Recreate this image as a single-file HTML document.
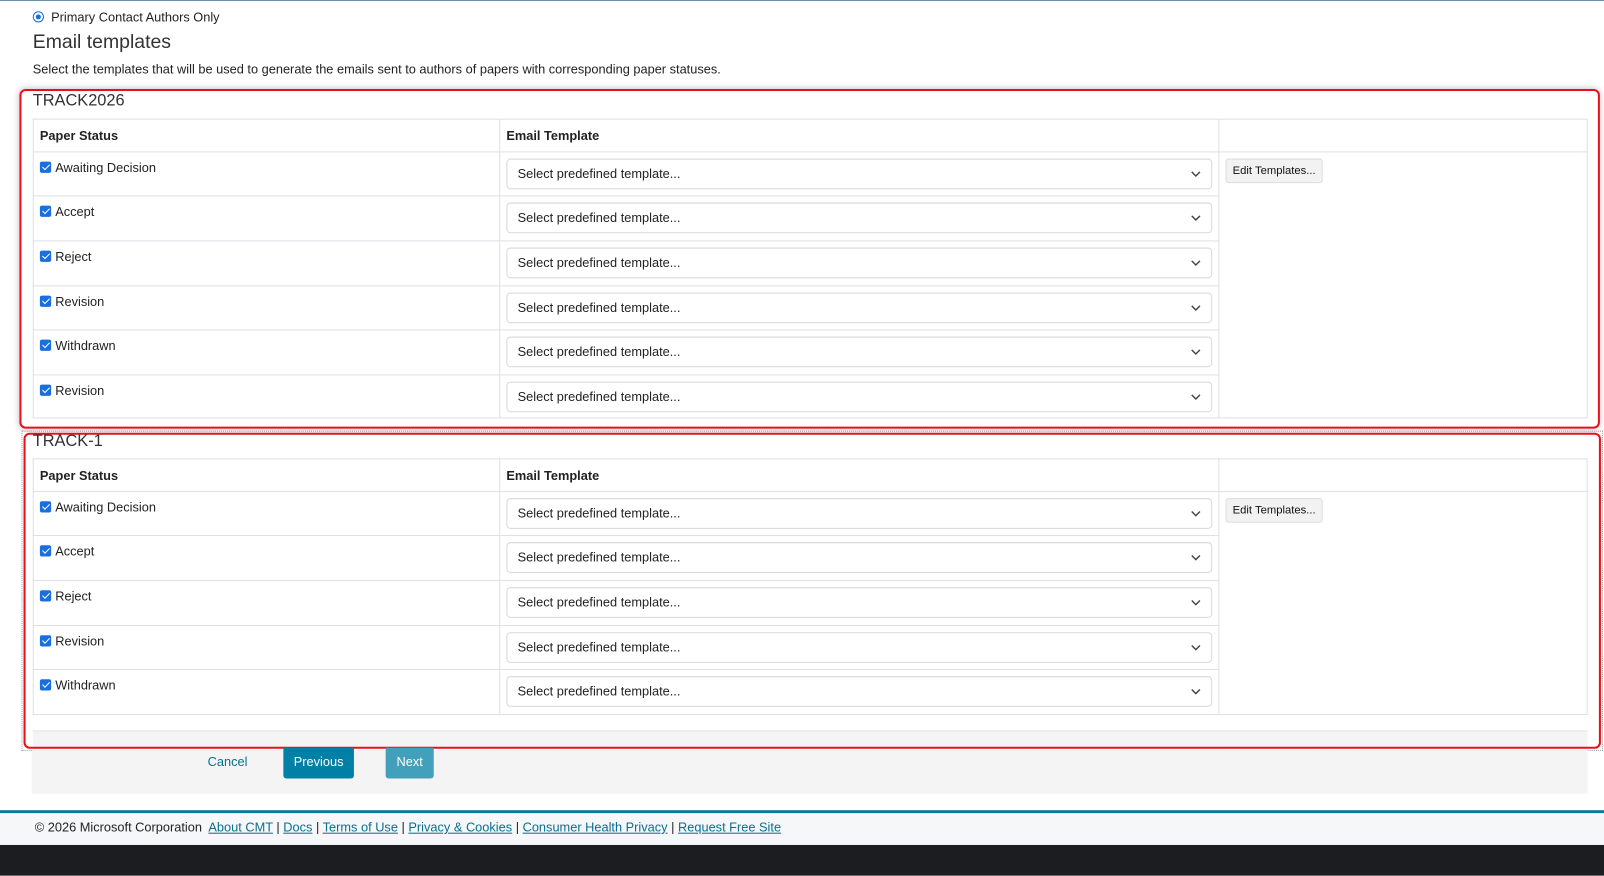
<!DOCTYPE html>
<html><head><style>
*{box-sizing:border-box;margin:0;padding:0}
body{width:1604px;height:852px;background:#fff;font-family:"Liberation Sans",Arial,sans-serif;font-size:12.5px;color:#222;position:relative;overflow:hidden}
#w{position:absolute;left:0;top:0;width:1568px;height:833px;transform:scale(1.02296);transform-origin:0 0}
.a{position:absolute}
.box{position:absolute;border:2px solid #e8101a;border-radius:6px;box-shadow:0 0 6px rgba(0,0,0,.25)}
table{position:absolute;border-collapse:collapse;left:32px;width:1520px}
td,th{border:1px solid #dfe0e6;text-align:left;vertical-align:top}
th{height:32px;font-weight:bold;font-size:12.5px;padding:0 6px;vertical-align:middle}
td.s{padding:8px 6px;font-size:12.5px}
.cb{display:inline-block;width:11px;height:11px;background:#1a6fe0;border-radius:2px;vertical-align:-1px;margin-right:4px;position:relative}
.cb:after{content:"";position:absolute;left:3.5px;top:1px;width:3px;height:6px;border:solid #fff;border-width:0 1.6px 1.6px 0;transform:rotate(45deg)}
.sel{margin:6px 6px 0 6px;height:30px;border:1px solid #d8d8dc;border-radius:4px;padding:0 10px;line-height:28px;position:relative;font-size:12.5px;color:#222}
.sel svg{position:absolute;right:10px;top:11px}
.btn{display:inline-block;margin:6px;background:#f2f2f2;border:1px solid #ddd;border-radius:3px;padding:0 6px;height:24px;line-height:22px;font-size:11px;color:#111}
a{color:#0a6f8f;text-decoration:underline}
</style></head><body><div id="w">
<div class="a" style="left:0;top:0;width:1568px;height:1px;background:#6b8fa6"></div>
<div class="a" style="left:32px;top:11px;width:11px;height:11px;border-radius:50%;border:1px solid #1a6fe0;background:#fff"><div style="margin:2px;width:5px;height:5px;border-radius:50%;background:#1a6fe0"></div></div>
<div class="a" style="left:50px;top:10px">Primary Contact Authors Only</div>
<div class="a" style="left:32px;top:31px;font-size:19px;color:#333">Email templates</div>
<div class="a" style="left:32px;top:61px">Select the templates that will be used to generate the emails sent to authors of papers with corresponding paper statuses.</div>

<div class="box" style="left:19px;top:87px;width:1545px;height:332px"></div>
<div class="a" style="left:32px;top:90px;font-size:16px;color:#333">TRACK2026</div>
<table style="top:116px">
<tr><th style="width:456px">Paper Status</th><th style="width:703px">Email Template</th><th></th></tr>
<tr style="height:43px"><td class="s"><span class="cb"></span>Awaiting Decision</td><td><div class="sel">Select predefined template...<svg width="10" height="7"><path d="M1 1l4 4 4-4" stroke="#444" stroke-width="1.4" fill="none"/></svg></div></td><td rowspan="6"><span class="btn">Edit Templates...</span></td></tr>
<tr style="height:44px"><td class="s"><span class="cb"></span>Accept</td><td><div class="sel">Select predefined template...<svg width="10" height="7"><path d="M1 1l4 4 4-4" stroke="#444" stroke-width="1.4" fill="none"/></svg></div></td></tr>
<tr style="height:44px"><td class="s"><span class="cb"></span>Reject</td><td><div class="sel">Select predefined template...<svg width="10" height="7"><path d="M1 1l4 4 4-4" stroke="#444" stroke-width="1.4" fill="none"/></svg></div></td></tr>
<tr style="height:43px"><td class="s"><span class="cb"></span>Revision</td><td><div class="sel">Select predefined template...<svg width="10" height="7"><path d="M1 1l4 4 4-4" stroke="#444" stroke-width="1.4" fill="none"/></svg></div></td></tr>
<tr style="height:44px"><td class="s"><span class="cb"></span>Withdrawn</td><td><div class="sel">Select predefined template...<svg width="10" height="7"><path d="M1 1l4 4 4-4" stroke="#444" stroke-width="1.4" fill="none"/></svg></div></td></tr>
<tr style="height:42px"><td class="s"><span class="cb"></span>Revision</td><td><div class="sel">Select predefined template...<svg width="10" height="7"><path d="M1 1l4 4 4-4" stroke="#444" stroke-width="1.4" fill="none"/></svg></div></td></tr>
</table>

<div class="a" style="left:21px;top:421px;width:1546px;height:313px;border:1px dotted #999"></div>
<div class="a" style="left:32px;top:714px;width:1520px;height:17px;background:#f4f4f4;border-top:1px solid #e4e4e4"></div>
<div class="box" style="left:23px;top:423px;width:1542px;height:309px;box-shadow:none"></div>
<div class="a" style="left:32px;top:423px;font-size:16px;color:#333">TRACK-1</div>
<table style="top:448px">
<tr><th style="width:456px">Paper Status</th><th style="width:703px">Email Template</th><th></th></tr>
<tr style="height:43px"><td class="s"><span class="cb"></span>Awaiting Decision</td><td><div class="sel">Select predefined template...<svg width="10" height="7"><path d="M1 1l4 4 4-4" stroke="#444" stroke-width="1.4" fill="none"/></svg></div></td><td rowspan="5"><span class="btn">Edit Templates...</span></td></tr>
<tr style="height:44px"><td class="s"><span class="cb"></span>Accept</td><td><div class="sel">Select predefined template...<svg width="10" height="7"><path d="M1 1l4 4 4-4" stroke="#444" stroke-width="1.4" fill="none"/></svg></div></td></tr>
<tr style="height:44px"><td class="s"><span class="cb"></span>Reject</td><td><div class="sel">Select predefined template...<svg width="10" height="7"><path d="M1 1l4 4 4-4" stroke="#444" stroke-width="1.4" fill="none"/></svg></div></td></tr>
<tr style="height:43px"><td class="s"><span class="cb"></span>Revision</td><td><div class="sel">Select predefined template...<svg width="10" height="7"><path d="M1 1l4 4 4-4" stroke="#444" stroke-width="1.4" fill="none"/></svg></div></td></tr>
<tr style="height:44px"><td class="s"><span class="cb"></span>Withdrawn</td><td><div class="sel">Select predefined template...<svg width="10" height="7"><path d="M1 1l4 4 4-4" stroke="#444" stroke-width="1.4" fill="none"/></svg></div></td></tr>
</table>

<div class="a" style="left:31px;top:733px;width:1521px;height:43px;background:#f4f4f4"></div>
<div class="a" style="left:203px;top:738px;color:#0a6f8f">Cancel</div>
<div class="a" style="left:277px;top:731px;width:69px;height:30px;background:#0080a6;border-radius:0 0 3px 3px;color:#fff;text-align:center;line-height:29px">Previous</div>
<div class="a" style="left:377px;top:731px;width:47px;height:30px;background:#42a0ba;border-radius:0 0 3px 3px;color:#fff;text-align:center;line-height:29px">Next</div>

<div class="a" style="left:0;top:792px;width:1568px;height:3px;background:#0a7a99"></div>
<div class="a" style="left:0;top:795px;width:1568px;height:31px;background:#f5f7f9"></div>
<div class="a" style="left:34px;top:802px;color:#222">© 2026 Microsoft Corporation&nbsp; <a>About CMT</a> | <a>Docs</a> | <a>Terms of Use</a> | <a>Privacy &amp; Cookies</a> | <a>Consumer Health Privacy</a> | <a>Request Free Site</a></div>
<div class="a" style="left:0;top:826px;width:1568px;height:30px;background:#1b1d20"></div>
</div></body></html>
